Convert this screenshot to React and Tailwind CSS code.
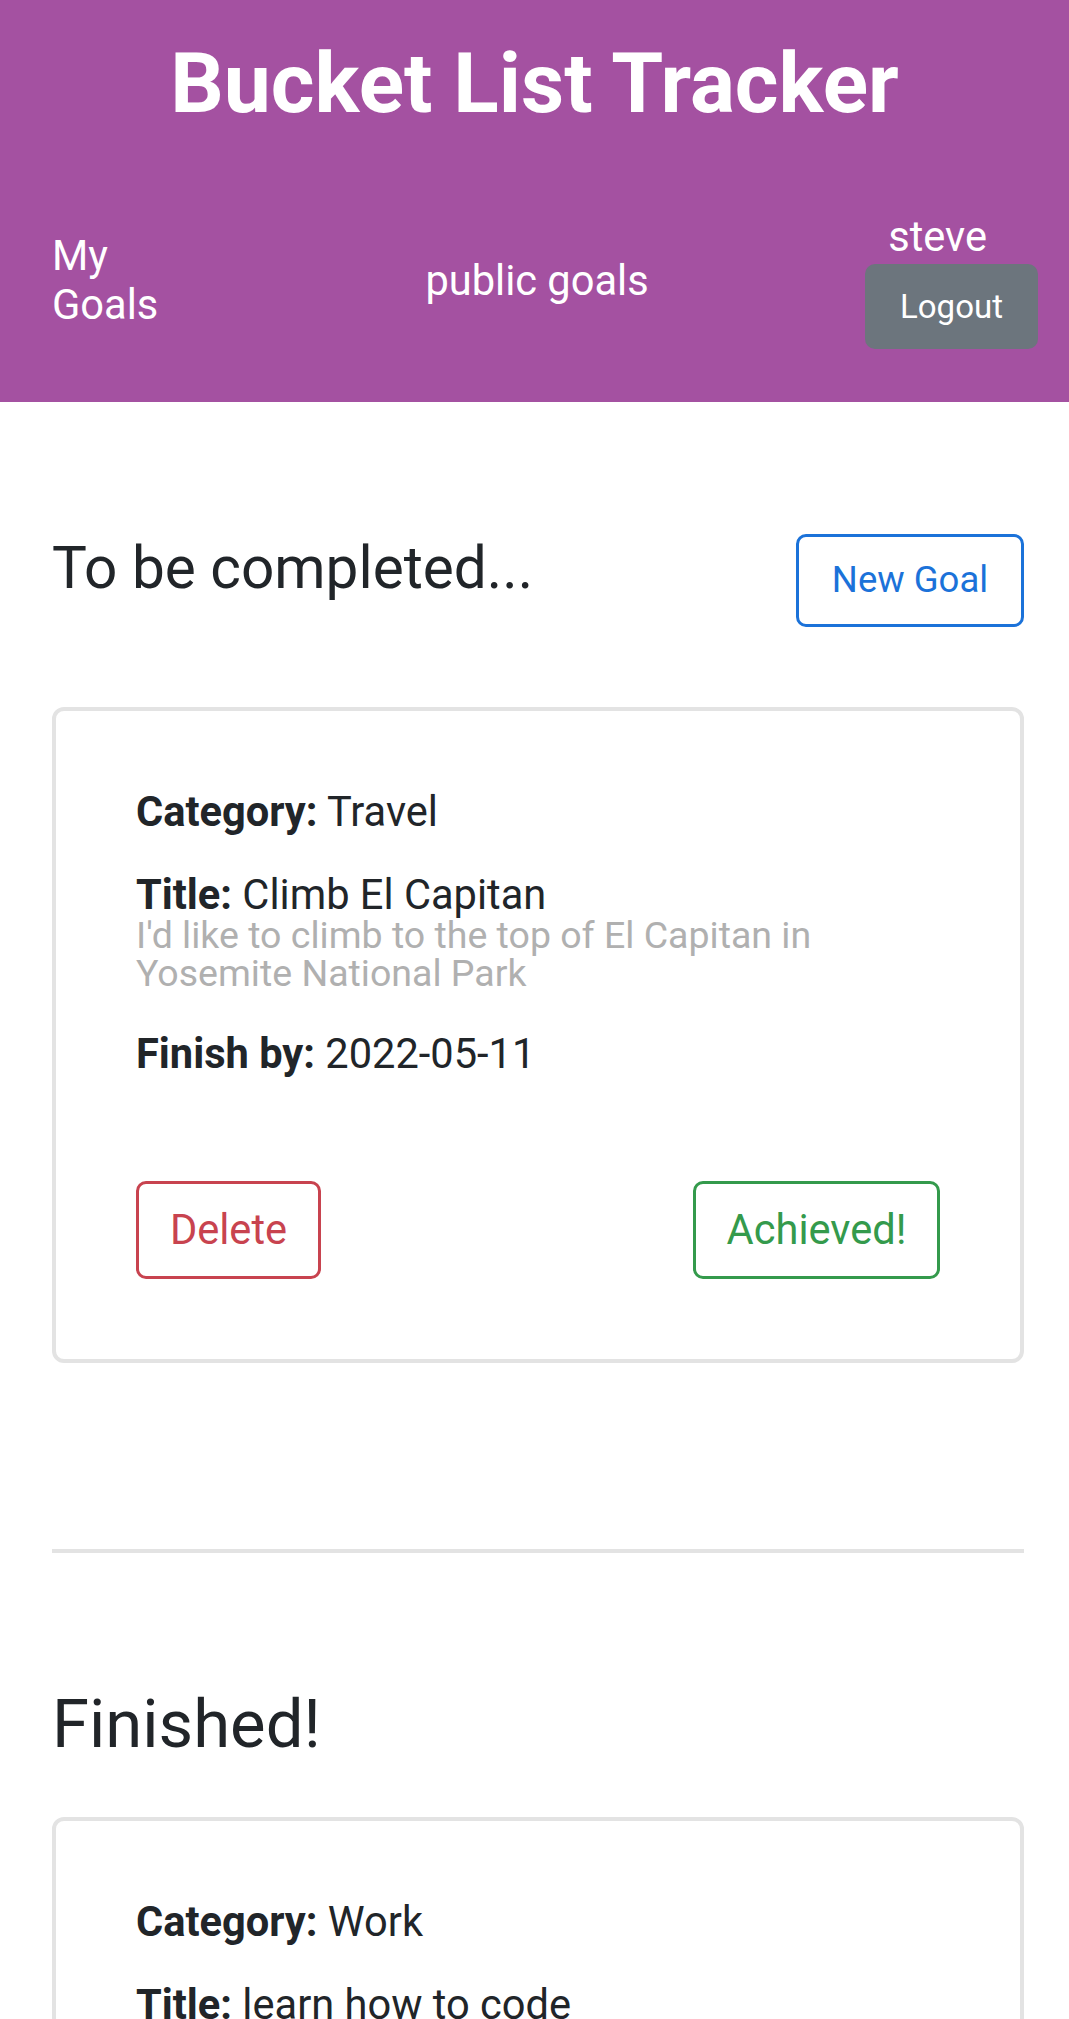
export default function App() {
  const font = { fontFamily: "Roboto, 'Noto Sans', Arial, sans-serif" };
  return (
    <div className="min-h-[2019px] bg-white text-[#212529]" style={font}>
      <header className="h-[402px] bg-[#a451a1] text-white">
        <h1 className="pt-[34px] text-center text-[84px] font-bold leading-[1.2]">Bucket List Tracker</h1>
        <nav className="mt-[77px] grid grid-cols-[248px_1fr_264px] items-center pl-[52px] pr-[31px]">
          <div className="w-[120px] text-[41.6px] leading-[49px]">My Goals</div>
          <div className="text-center text-[41.6px] leading-[49px]">public goals</div>
          <div className="flex flex-col items-end">
            <div className="mr-[51px] text-[41.6px] leading-[49px]">steve</div>
            <button className="mt-[3px] flex h-[85px] w-[173px] items-center justify-center rounded-[10px] bg-[#6c757d] text-[33px] text-white">
              Logout
            </button>
          </div>
        </nav>
      </header>

      <main className="pl-[52px] pr-[45px]">
        <div className="mt-[129px] flex items-start justify-between">
          <h3 className="text-[58.5px] leading-[74px]">To be completed...</h3>
          <button className="mt-[3px] flex h-[93px] w-[228px] items-center justify-center rounded-[10px] border-[3px] border-[#1b72d9] text-[36.5px] text-[#1b72d9]">
            New Goal
          </button>
        </div>

        <div className="mt-[80px] rounded-[12px] border-[4px] border-[#e3e3e3] px-[80px] pb-[80px] pt-[80px]">
          <p className="text-[41.6px] leading-[42px]">
            <b className="font-bold">Category:</b> Travel
          </p>
          <p className="mt-[41px] text-[41.6px] leading-[42px]">
            <b className="font-bold">Title:</b> Climb El Capitan
          </p>
          <p className="text-[37.5px] leading-[38px] text-[#b0b0b0]">
            I'd like to climb to the top of El Capitan in Yosemite National Park
          </p>
          <p className="mt-[41px] text-[41.6px] leading-[42px]">
            <b className="font-bold">Finish by:</b> 2022-05-11
          </p>
          <div className="mt-[106px] flex items-center justify-between">
            <button className="flex h-[98px] w-[185px] items-center justify-center rounded-[10px] border-[3px] border-[#c8434f] text-[41.6px] text-[#c8434f]">
              Delete
            </button>
            <button className="flex h-[98px] w-[247px] items-center justify-center rounded-[10px] border-[3px] border-[#349a4c] text-[41.6px] text-[#349a4c]">
              Achieved!
            </button>
          </div>
        </div>

        <hr className="mt-[186px] border-0 border-t-[4px] border-[#e3e3e3]" />

        <h2 className="mt-[130px] text-[67px] leading-[82px]">Finished!</h2>

        <div className="mt-[52px] mb-[80px] rounded-[12px] border-[4px] border-[#e3e3e3] px-[80px] pb-[80px] pt-[80px]">
          <p className="text-[41.6px] leading-[42px]">
            <b className="font-bold">Category:</b> Work
          </p>
          <p className="mt-[41px] text-[41.6px] leading-[42px]">
            <b className="font-bold">Title:</b> learn how to code
          </p>
          <p className="text-[37.5px] leading-[38px] text-[#b0b0b0]">
            I want to build my own web applications
          </p>
          <p className="mt-[41px] text-[41.6px] leading-[42px]">
            <b className="font-bold">Finished on:</b> 2022-04-01
          </p>
        </div>
      </main>
    </div>
  );
}
